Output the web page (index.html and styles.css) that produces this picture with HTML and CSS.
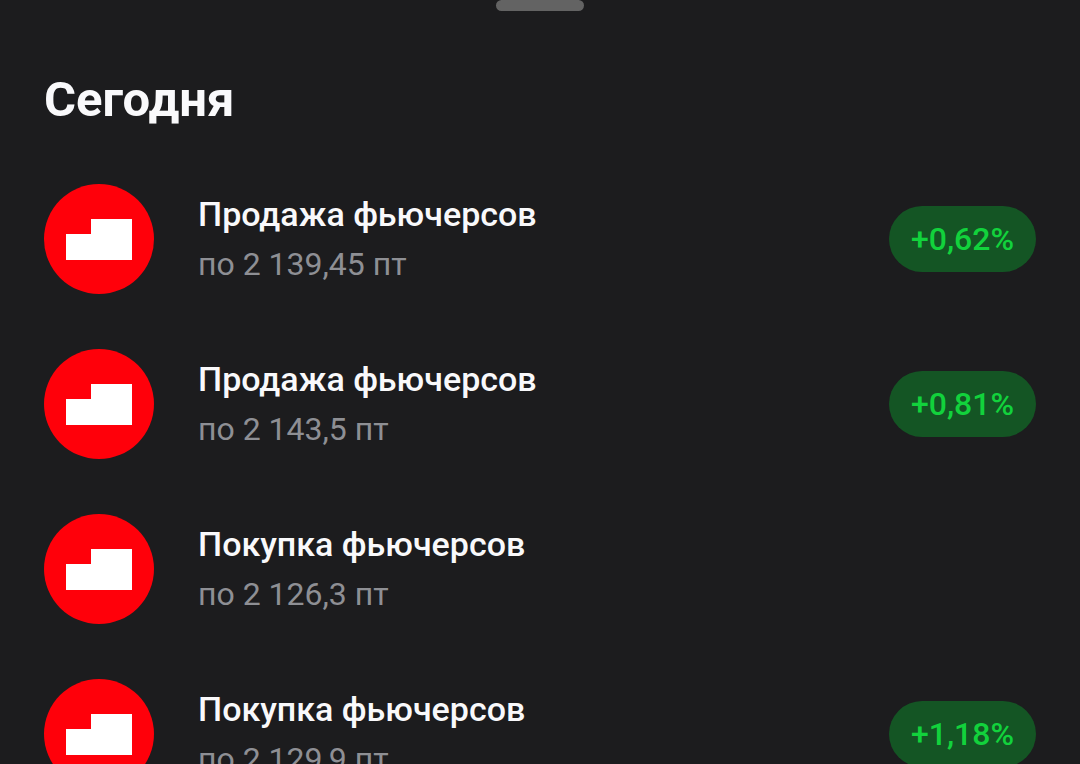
FILE: index.html
```html
<!DOCTYPE html>
<html lang="ru">
<head>
    <meta charset="UTF-8">
    <meta name="viewport" content="width=device-width, initial-scale=1.0">
    <title>Сделки</title>
    <link rel="stylesheet" href="styles.css">
</head>
<body>
    <main class="sheet">
        <div class="handle"></div>
        <h1 class="title">Сегодня</h1>
        <ul class="deals">
            <li class="deal">
                <svg class="logo" viewBox="0 0 110 110" aria-hidden="true">
                    <circle cx="55" cy="55" r="55" fill="#ff000a"/>
                    <path d="M22 50h25V35h41v41H22z" fill="#fff"/>
                </svg>
                <div class="info">
                    <div class="name">Продажа фьючерсов</div>
                    <div class="price">по 2 139,45 пт</div>
                </div>
                <span class="badge">+0,62%</span>
            </li>
            <li class="deal">
                <svg class="logo" viewBox="0 0 110 110" aria-hidden="true">
                    <circle cx="55" cy="55" r="55" fill="#ff000a"/>
                    <path d="M22 50h25V35h41v41H22z" fill="#fff"/>
                </svg>
                <div class="info">
                    <div class="name">Продажа фьючерсов</div>
                    <div class="price">по 2 143,5 пт</div>
                </div>
                <span class="badge">+0,81%</span>
            </li>
            <li class="deal">
                <svg class="logo" viewBox="0 0 110 110" aria-hidden="true">
                    <circle cx="55" cy="55" r="55" fill="#ff000a"/>
                    <path d="M22 50h25V35h41v41H22z" fill="#fff"/>
                </svg>
                <div class="info">
                    <div class="name">Покупка фьючерсов</div>
                    <div class="price">по 2 126,3 пт</div>
                </div>
            </li>
            <li class="deal">
                <svg class="logo" viewBox="0 0 110 110" aria-hidden="true">
                    <circle cx="55" cy="55" r="55" fill="#ff000a"/>
                    <path d="M22 50h25V35h41v41H22z" fill="#fff"/>
                </svg>
                <div class="info">
                    <div class="name">Покупка фьючерсов</div>
                    <div class="price">по 2 129,9 пт</div>
                </div>
                <span class="badge">+1,18%</span>
            </li>
        </ul>
    </main>
</body>
</html>
```
FILE: styles.css
```css
* {
    box-sizing: border-box;
}

body {
    margin: 0;
    height: 100vh;
    overflow: hidden;
    font-family: Roboto, sans-serif;
    background: #1c1c1e;
    color: #f9f9fb;
}

.sheet {
    padding: 0 44px;
}

.handle {
    width: 88px;
    height: 11px;
    margin: 0 auto;
    border-radius: 6px;
    background: #636363;
}

.title {
    margin: 59px 0 54px;
    font-size: 49px;
    font-weight: 700;
    line-height: 60px;
}

.deals {
    display: flex;
    flex-direction: column;
    gap: 55px;
    margin: 0;
    padding: 0;
    list-style: none;
}

.deal {
    display: flex;
    align-items: center;
    gap: 44px;
}

.logo {
    flex-shrink: 0;
    width: 110px;
    height: 110px;
}

.info {
    flex: 1;
}

.name {
    font-size: 34px;
    font-weight: 500;
    line-height: 50px;
}

.price {
    font-size: 32px;
    line-height: 50px;
    color: #8e8f94;
}

.badge {
    padding: 0 22px;
    border-radius: 33px;
    font-size: 32px;
    font-weight: 500;
    line-height: 66px;
    background: #145524;
    color: #12d23c;
}
```
